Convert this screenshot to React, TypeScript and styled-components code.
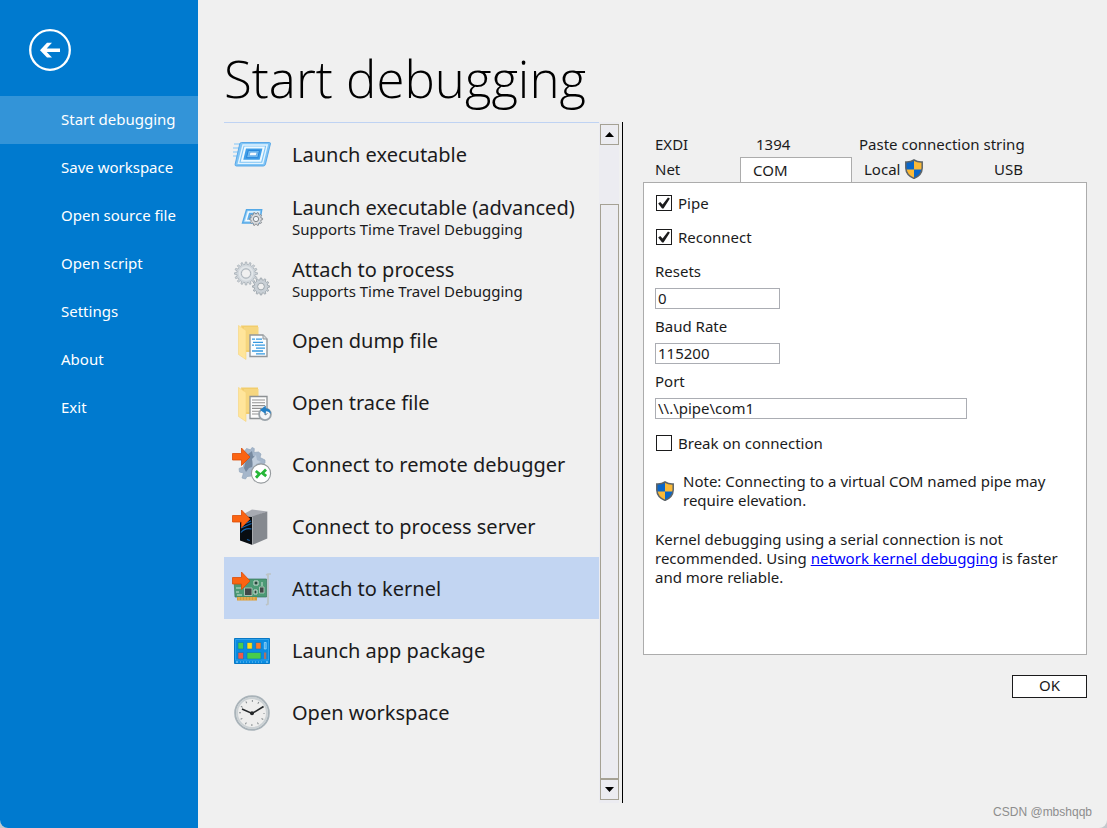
import React from "react";
import styled, { createGlobalStyle, css } from "styled-components";

const GlobalStyle = createGlobalStyle`
  *, *::before, *::after { box-sizing: border-box; }
  body {
    margin: 0;
    background: #c4c8cc;
    color: #1b1b1c;
    font-family: "Noto Sans", "Open Sans", sans-serif;
    font-size: 15px;
    line-height: 20px;
  }
  button, input { font: inherit; color: inherit; }
`;

const Window = styled.div`
  display: flex;
  min-height: 100vh;
  overflow: hidden;
  border-radius: 0 0 8px 8px;
  background: #f0f0f0;
`;

const Sidebar = styled.aside`
  flex: none;
  width: 198px;
  background: #007acf;
`;

const BackButton = styled.button`
  display: block;
  width: 42px;
  height: 42px;
  margin: 29px 0 25px 29px;
  padding: 0;
  border: 0;
  background: none;
`;

const NavItem = styled.a<{ $active?: boolean }>`
  display: block;
  padding: 0 0 2px 61px;
  color: #fff;
  line-height: 46px;
  text-decoration: none;
  white-space: nowrap;
  background: ${(p) => (p.$active ? "#3394d8" : "transparent")};
`;

const Main = styled.main`
  display: flex;
  flex: 1;
  flex-direction: column;
  min-width: 0;
  padding: 0 20px 0 26px;
`;

const Title = styled.h1`
  margin: 0;
  padding: 36px 0 2px;
  color: #000;
  font-family: "Open Sans", "Noto Sans", sans-serif;
  font-size: 51px;
  font-weight: 300;
  line-height: 84px;
`;

const Columns = styled.div`
  display: flex;
  flex: 1;
  gap: 20px;
`;

const ListPane = styled.div`
  display: flex;
  flex: none;
  width: 399px;
  padding-right: 3px;
  border-right: 1px solid #000;
`;

const TargetList = styled.ul`
  flex: 1;
  margin: 0;
  padding: 0;
  border-top: 1px solid #bfd3f3;
  list-style: none;
`;

const Target = styled.button<{ $selected?: boolean }>`
  display: flex;
  align-items: center;
  gap: 20px;
  width: 100%;
  height: 62px;
  padding: 2px 0 0 8px;
  border: 0;
  text-align: left;
  white-space: nowrap;
  background: ${(p) => (p.$selected ? "#c2d5f2" : "transparent")};

  svg { flex: none; }
`;

const TargetName = styled.span`
  display: block;
  font-size: 20px;
  line-height: 24px;
`;

const TargetHint = styled.span`
  display: block;
  line-height: 19px;
`;

const ScrollBar = styled.div`
  display: flex;
  flex-direction: column;
  width: 20px;
  padding: 2px 0 3px 1px;
  background: #ececf1;
`;

const scrollPart = css`
  width: 19px;
  border: 1px solid #a5a194;
  background: #ececf1;
`;

const ScrollButton = styled.button`
  ${scrollPart}
  display: flex;
  flex: none;
  align-items: center;
  justify-content: center;
  height: 21px;
  padding: 0;
`;

const ScrollThumb = styled.div`
  ${scrollPart}
  flex: 1;
  margin-top: 59px;
`;

const Details = styled.section`
  display: flex;
  flex: 1;
  flex-direction: column;
  min-width: 0;
  padding-top: 10px;
`;

const TabRow = styled.div`
  display: flex;
  height: 25px;
`;

const Tab = styled.button<{ $share: number; $selected?: boolean }>`
  display: flex;
  flex: ${(p) => `${p.$share} ${p.$share} ${p.$share}px`};
  align-items: center;
  gap: 4px;
  padding: 0 0 2px 12px;
  border: 0;
  white-space: nowrap;
  background: transparent;
  ${(p) =>
    p.$selected &&
    css`
      padding-bottom: 0;
      border: 1px solid #acacac;
      border-bottom: 0;
      background: #fff;
    `}
`;

const Panel = styled.form`
  min-height: 473px;
  padding: 10px 11px;
  border: 1px solid #acacac;
  background: #fff;
`;

const CheckRow = styled.label`
  display: flex;
  align-items: center;
  gap: 6px;
  height: 20px;
  margin: 0 0 14px 1px;
`;

const CheckBox = styled.input`
  appearance: none;
  width: 16px;
  height: 16px;
  margin: 0;
  border: 1px solid #1b1b1c;
  background: #fff;

  &:checked {
    background: #fff
      url("data:image/svg+xml,%3Csvg xmlns='http://www.w3.org/2000/svg' viewBox='0 0 14 14'%3E%3Cpath d='M1.2 7.4 L3.2 5.9 L5.6 8.6 L11 1.4 L12.9 2.5 L6.5 12.6 H5.1 Z' fill='%231b1b1c'/%3E%3C/svg%3E");
  }
`;

const Field = styled.div`
  display: flex;
  flex-direction: column;
  align-items: flex-start;
  gap: 7px;
  margin-bottom: 7px;
`;

const TextBox = styled.input<{ $wide?: boolean }>`
  width: ${(p) => (p.$wide ? 312 : 125)}px;
  max-width: 100%;
  height: 21px;
  padding: 0 2px 2px;
  border: 1px solid #abadb3;
  background: #fff;
`;

const Fields = styled.div`
  margin-bottom: 14px;
`;

const Note = styled.div`
  display: flex;
  align-items: center;
  gap: 8px;
  margin: 19px 0 20px;
  line-height: 19px;

  svg { flex: none; }
`;

const Advice = styled.p`
  margin: 0;
  line-height: 19px;

  a { color: #0000ff; }
`;

const OkButton = styled.button`
  align-self: flex-end;
  width: 75px;
  height: 23px;
  margin-top: 20px;
  padding: 0 0 2px;
  border: 1px solid #1b1b1c;
  background: #fff;
  line-height: 19px;
`;

const Footer = styled.footer`
  height: 25px;
  margin-right: -5px;
  color: #8d8d8d;
  font-family: "Liberation Sans", Arial, sans-serif;
  font-size: 12px;
  line-height: 18px;
  text-align: right;
`;

const Art = ({ children }: { children: React.ReactNode }) => (
  <svg width="40" height="40" viewBox="0 0 40 40" aria-hidden="true">
    {children}
  </svg>
);

const Shield = () => (
  <svg width="20" height="20" viewBox="0 0 20 20" aria-hidden="true">
    <path d="M10 1 C7.5 2.6 4.5 3.2 1.8 3 V9 C2 14.2 5.5 17.6 10 19.4 C14.5 17.6 18 14.2 18.2 9 V3 C15.5 3.2 12.5 2.6 10 1Z" fill="#fbb936" />
    <path d="M10 1 C7.5 2.6 4.5 3.2 1.8 3 V9 L2 10.5 H10Z M10 10.5 H18 C17 14.8 14 17.8 10 19.4Z" fill="#0a66c8" />
    <path d="M10 1 C7.5 2.6 4.5 3.2 1.8 3 V9 C2 14.2 5.5 17.6 10 19.4 C14.5 17.6 18 14.2 18.2 9 V3 C15.5 3.2 12.5 2.6 10 1Z" fill="none" stroke="#5d6468" strokeWidth="1.5" />
  </svg>
);

function Gear({ cx, cy, r, teeth, fill, stroke, hole }: { cx: number; cy: number; r: number; teeth: number; fill: string; stroke: string; hole: string }) {
  const points: string[] = [];
  for (let i = 0; i < teeth; i++) {
    [[-0.26, 0.8], [-0.16, 1], [0.16, 1], [0.26, 0.8]].forEach(([shift, scale]) => {
      const angle = ((i + shift) * 2 * Math.PI) / teeth;
      points.push(`${(cx + r * scale * Math.cos(angle)).toFixed(2)},${(cy + r * scale * Math.sin(angle)).toFixed(2)}`);
    });
  }
  return (
    <>
      <polygon points={points.join(" ")} fill={fill} stroke={stroke} strokeWidth="0.9" />
      <circle cx={cx} cy={cy} r={r * 0.4} fill={hole} stroke={stroke} strokeWidth="1" />
    </>
  );
}

const ArrowMark = () => (
  <path d="M0.5 8.5 H9.5 V3 L18 12 L9.5 20.5 V15 H0.5Z" fill="#fb6412" stroke="#dc4b06" strokeWidth="0.8" />
);

const Folder = () => (
  <>
    <path d="M9 4.5 H26 V31 H13Z" fill="#f2cd6c" />
    <path d="M12 6 H26.5 V29 H12Z" fill="#f6d67f" />
    <path d="M6.5 4.5 L14 9.5 V38.5 L6.5 33.5Z" fill="#ffe59b" stroke="#f6d37a" strokeWidth="0.6" />
  </>
);

const LaunchArt = () => (
  <Art>
    <path d="M2 9 H11 M1 13 H10 M1 17 H9 M1 21 H8" stroke="#a5d3f6" strokeWidth="1.4" />
    <path d="M9.5 7.5 H37.5 Q38.7 7.5 38.4 9 L33.5 29 Q33.1 31 31.3 31 H4.5 Q2.8 31 3.1 29.3 L7.7 9 Q8 7.5 9.5 7.5Z" fill="#7fc4f5" stroke="#4fa3e6" strokeWidth="0.9" />
    <path d="M11 10 H35.2 L30.7 28.4 H6.4Z" fill="none" stroke="#e3f4ff" strokeWidth="1.4" />
    <path d="M13.2 12.5 H31.7 L28.4 25.7 H10Z" fill="#3f9ee8" stroke="#eef9ff" strokeWidth="2" />
    <path d="M16.3 15.4 H27.5 L25.8 22.7 H14.5Z" fill="#73bdf1" stroke="#2683da" />
    <path d="M18 17.2 H25.1 L24.2 20.7 H17.2Z" fill="#f4faff" stroke="#3f94df" strokeWidth="0.6" />
  </Art>
);

const LaunchAdvancedArt = () => (
  <Art>
    <path d="M14.5 12.7 H29.7 L27.5 26 H10.5Z" fill="#9bd1f7" stroke="#55a9e7" strokeWidth="1.4" />
    <path d="M16.5 15 H27 L25.5 23.5 H14Z" fill="#5faeea" stroke="#f4fbff" strokeWidth="1.5" />
    <Gear cx={24} cy={22} r={6.6} teeth={10} fill="#d8dadd" stroke="#82878c" hole="#f0f5fa" />
  </Art>
);

const ProcessArt = () => (
  <Art>
    <Gear cx={14} cy={14.5} r={11.5} teeth={16} fill="#d1d7dc" stroke="#aab2b9" hole="#f0f0f0" />
    <circle cx="14" cy="14.5" r="6.5" fill="none" stroke="#e2e6e9" strokeWidth="1.5" />
    <Gear cx={29} cy={27.5} r={8.5} teeth={12} fill="#c9d0d6" stroke="#9da6ad" hole="#f0f0f0" />
  </Art>
);

const DumpArt = () => (
  <Art>
    <Folder />
    <path d="M18 14 H31 L35 18 V35.5 H18Z" fill="#fafdff" stroke="#92979b" strokeWidth="1.4" />
    <path d="M31 14 V18 H35" fill="#d8dde0" stroke="#92979b" />
    <path d="M20 18.2 H23 M24 18.2 H30 M21 21.4 H31 M20 24.2 H22 M23 24.2 H33 M24 27.2 H33 M20 30 H31 M24 32.8 H33" stroke="#3598e0" strokeWidth="1.3" />
  </Art>
);

const TraceArt = () => (
  <Art>
    <Folder />
    <path d="M18 13.5 H35 V35.5 H18Z" fill="#fcfcfc" stroke="#8d9194" strokeWidth="1.3" />
    <path d="M20 17 H33 M20 19.8 H33 M20 22.6 H33 M20 25.4 H32 M20 28.2 H28 M20 31 H27" stroke="#919191" strokeWidth="1.1" />
    <circle cx="33" cy="31.3" r="5.9" fill="#f3f6f8" stroke="#9aa3a9" strokeWidth="1.8" />
    <path d="M33 28 V32 L35.5 30.5" stroke="#687b88" fill="none" />
    <path d="M28 27 L33.8 22.5 V25.2 Q38.7 25.5 38.9 31 Q36.5 27.8 33.8 28.4 V31Z" fill="#237fc5" />
  </Art>
);

const RemoteArt = () => (
  <Art>
    <path d="M12 7 L14.5 3.5 L18.5 4.8 L20 2.5 L22.3 3.5 L22 7.5 L26.5 7 L29 9 L28 12.5 L33 15 V18 L29 20.5 L30 25 L26 28.5 L22 26.5 L19.5 31 L15 31.5 L13.5 34 L10 33 L11.5 28 L7.5 27 L7 23.5 L11.5 22Z" fill="#a6b7cb" stroke="#94a7bd" strokeWidth="0.7" />
    <path d="M15 10 L20 6 L21 11 L24 12 L21 16 L20 22 L17 23 L14 27 L12 23Z" fill="#76899f" />
    <path d="M20 14 L24 10 L25 15 L29 17 L24 19 L22 26Z" fill="#c1cedd" />
    <ArrowMark />
    <circle cx="29" cy="28.5" r="9.6" fill="#fff" stroke="#969b9e" strokeWidth="1.1" />
    <path d="M23.8 26 L27.4 29 L24 32.8 M34 24.6 L30.4 28.2 L34.2 31.2" fill="none" stroke="#26b737" strokeWidth="2.8" />
  </Art>
);

const ServerArt = () => (
  <Art>
    <path d="M8 9 L20 2.5 L35.3 4.5 L21 10Z" fill="#a8abb2" />
    <path d="M20 9.5 L35.3 4.5 V31.5 L20 38Z" fill="#85898f" />
    <path d="M8 9 L20.5 10 V38 L8 33.5Z" fill="#080d12" />
    <path d="M9 21 L19.5 16.5 M9 25.5 Q13 20.5 19.5 22 M15 32.5 L17.8 33.5 M11 17.5 L19 14" stroke="#1764ac" strokeWidth="1.2" fill="none" />
    <path d="M20.5 10 V38" stroke="#c1c4c7" strokeWidth="0.8" />
    <ArrowMark />
  </Art>
);

const KernelArt = () => (
  <Art>
    <path d="M34 6 L36 5 H39 M36 5 V35 L34 36" fill="none" stroke="#bcc4c6" strokeWidth="1.7" />
    <path d="M2 10 H34.5 V28 H3Z" fill="#4c9a75" stroke="#37765a" strokeWidth="0.7" />
    <path d="M5 28 H25 V31.5 H5Z" fill="#d79b3b" />
    <path d="M7 28 V31.5 M10 28 V31.5 M13 28 V31.5 M16 28 V31.5 M19 28 V31.5 M22 28 V31.5" stroke="#f4c06d" strokeWidth="0.8" />
    <path d="M12.5 19 H20 V26.5 H12.5Z M27.5 18 H32 V24 H27.5Z" fill="#414948" stroke="#bcd0c5" strokeWidth="0.8" />
    <path d="M4 19 H9 M4 23 H7 M22 12 H26 V16 H22Z M30 13 V17 M22 21 H25 V25 H22Z M5 26 H10" stroke="#c9dfd4" fill="#24483a" />
    <ArrowMark />
  </Art>
);

const PackageArt = () => (
  <Art>
    <path d="M2.5 7.5 H37.5 V32.5 H2.5Z" fill="#098ce2" stroke="#0878c5" />
    <path d="M3.5 8.5 H36.5 V29 H3.5Z" fill="none" stroke="#47aded" strokeWidth="0.6" />
    <path d="M6 11.5 H11.5 V18 H6Z M15 21.5 H29 V28 H15Z" fill="#48cc4b" stroke="#0775bd" strokeWidth="0.6" />
    <path d="M15 11.5 H20.3 V18 H15Z" fill="#ffdb18" stroke="#0775bd" strokeWidth="0.6" />
    <path d="M23.7 11.5 H29 V18 H23.7Z" fill="#fb792c" stroke="#0775bd" strokeWidth="0.6" />
    <path d="M6 21.5 H11.5 V28 H6Z" fill="#ee594a" stroke="#0775bd" strokeWidth="0.6" />
    <path d="M32.3 11.5 H34.2 V18 H32.3Z" fill="#3fa9e8" stroke="#bae6ff" strokeWidth="0.6" />
    <path d="M32 21.5 H34.3 V28 H32Z" fill="#a97367" />
    <path d="M4 31 H6 M34 31 H36" stroke="#a8ddff" />
    <path d="M8 31 H32" stroke="#74c2f2" strokeDasharray="1 2" />
  </Art>
);

const WorkspaceArt = () => (
  <Art>
    <circle cx="20" cy="20" r="16.8" fill="#eeeeed" stroke="#a9b3b9" strokeWidth="2" />
    <circle cx="20" cy="20" r="15" fill="none" stroke="#cbd1d4" strokeWidth="2" />
    <circle cx="20" cy="20" r="12" fill="none" stroke="#858b8e" strokeWidth="2" strokeDasharray="1 5.283" strokeDashoffset="0.5" />
    <path d="M10 16 L20 20.5 L31.5 13.5" fill="none" stroke="#25282a" strokeWidth="1.5" />
    <circle cx="20" cy="20.2" r="2" fill="#25282a" />
  </Art>
);

const navItems = ["Start debugging", "Save workspace", "Open source file", "Open script", "Settings", "About", "Exit"];

const targets = [
  { name: "Launch executable", art: <LaunchArt /> },
  { name: "Launch executable (advanced)", hint: "Supports Time Travel Debugging", art: <LaunchAdvancedArt /> },
  { name: "Attach to process", hint: "Supports Time Travel Debugging", art: <ProcessArt /> },
  { name: "Open dump file", art: <DumpArt /> },
  { name: "Open trace file", art: <TraceArt /> },
  { name: "Connect to remote debugger", art: <RemoteArt /> },
  { name: "Connect to process server", art: <ServerArt /> },
  { name: "Attach to kernel", art: <KernelArt /> },
  { name: "Launch app package", art: <PackageArt /> },
  { name: "Open workspace", art: <WorkspaceArt /> },
];

export default function App() {
  return (
    <>
      <GlobalStyle />
      <Window>
        <Sidebar>
          <BackButton aria-label="Back">
            <svg width="42" height="42" viewBox="0 0 42 42" aria-hidden="true">
              <circle cx="21" cy="21" r="19.8" fill="none" stroke="#fff" strokeWidth="2.3" />
              <path d="M11 21.2 L18 13.8 H23 L17.7 19.5 H31 V22.9 H17.7 L23 28.6 H18Z" fill="#fff" />
            </svg>
          </BackButton>
          <nav>
            {navItems.map((label, i) => (
              <NavItem key={label} href="#" $active={i === 0}>{label}</NavItem>
            ))}
          </nav>
        </Sidebar>
        <Main>
          <Title>Start debugging</Title>
          <Columns>
            <ListPane>
              <TargetList>
                {targets.map((t) => (
                  <li key={t.name}>
                    <Target $selected={t.name === "Attach to kernel"}>
                      {t.art}
                      <span>
                        <TargetName>{t.name}</TargetName>
                        {t.hint && <TargetHint>{t.hint}</TargetHint>}
                      </span>
                    </Target>
                  </li>
                ))}
              </TargetList>
              <ScrollBar>
                <ScrollButton aria-label="Scroll up">
                  <svg width="9" height="5" viewBox="0 0 9 5"><path d="M0 5 L4.5 0 L9 5Z" /></svg>
                </ScrollButton>
                <ScrollThumb />
                <ScrollButton aria-label="Scroll down">
                  <svg width="9" height="5" viewBox="0 0 9 5"><path d="M0 0 L4.5 5 L9 0Z" /></svg>
                </ScrollButton>
              </ScrollBar>
            </ListPane>
            <Details>
              <TabRow>
                <Tab $share={101}>EXDI</Tab>
                <Tab $share={103}>1394</Tab>
                <Tab $share={240}>Paste connection string</Tab>
              </TabRow>
              <TabRow>
                <Tab $share={97}>Net</Tab>
                <Tab $share={112} $selected>COM</Tab>
                <Tab $share={130}>Local <Shield /></Tab>
                <Tab $share={105}>USB</Tab>
              </TabRow>
              <Panel onSubmit={(e) => e.preventDefault()}>
                <CheckRow><CheckBox type="checkbox" defaultChecked />Pipe</CheckRow>
                <CheckRow><CheckBox type="checkbox" defaultChecked />Reconnect</CheckRow>
                <Fields>
                  <Field>
                    <label htmlFor="resets">Resets</label>
                    <TextBox id="resets" defaultValue="0" />
                  </Field>
                  <Field>
                    <label htmlFor="baud">Baud Rate</label>
                    <TextBox id="baud" defaultValue="115200" />
                  </Field>
                  <Field>
                    <label htmlFor="port">Port</label>
                    <TextBox id="port" $wide defaultValue={"\\\\.\\pipe\\com1"} />
                  </Field>
                </Fields>
                <CheckRow><CheckBox type="checkbox" />Break on connection</CheckRow>
                <Note>
                  <Shield />
                  <span>Note: Connecting to a virtual COM named pipe may require elevation.</span>
                </Note>
                <Advice>
                  Kernel debugging using a serial connection is not recommended. Using{" "}
                  <a href="#">network kernel debugging</a> is faster and more reliable.
                </Advice>
              </Panel>
              <OkButton>OK</OkButton>
            </Details>
          </Columns>
          <Footer>CSDN @mbshqqb</Footer>
        </Main>
      </Window>
    </>
  );
}
